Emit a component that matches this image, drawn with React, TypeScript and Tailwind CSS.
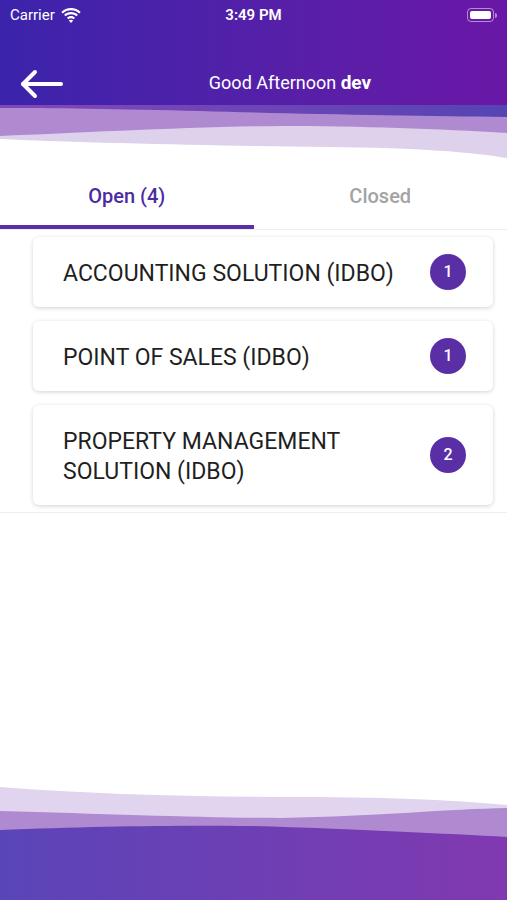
import React from 'react';

const ITEMS = [
  { id: 1, name: 'ACCOUNTING SOLUTION (IDBO)', count: 1 },
  { id: 2, name: 'POINT OF SALES (IDBO)', count: 1 },
  { id: 3, name: 'PROPERTY MANAGEMENT SOLUTION (IDBO)', count: 2 },
];

const StatusBar = () => (
  <div className="relative h-[30px] flex items-center px-[10px] text-white text-[15px]">
    <div className="flex items-center gap-[6px]">
      <span>Carrier</span>
      <svg width="20" height="15" viewBox="0 0 20 15" fill="white">
        <path d="M10 2.2c3.2 0 6.1 1.2 8.3 3.3l1.4-1.5C17.1 1.5 13.7 0 10 0S2.9 1.5.3 4l1.4 1.5C3.9 3.4 6.8 2.2 10 2.2z" />
        <path d="M10 6.2c2.1 0 4 .8 5.5 2.1l1.4-1.5C15.1 5.1 12.7 4.1 10 4.1S4.9 5.1 3.1 6.8l1.4 1.5C6 7 7.9 6.2 10 6.2z" />
        <path d="M10 10.2c1 0 1.9.4 2.6 1l1.4-1.5c-1.1-1-2.5-1.6-4-1.6s-2.9.6-4 1.6l1.4 1.5c.7-.6 1.6-1 2.6-1z" />
        <path d="M10 15l2.2-2.4c-.6-.5-1.4-.8-2.2-.8s-1.6.3-2.2.8L10 15z" />
      </svg>
    </div>
    <span className="absolute left-1/2 -translate-x-1/2 font-semibold">3:49 PM</span>
    <div className="ml-auto flex items-center">
      <div className="w-[27px] h-[14px] rounded-[4px] border border-white/50 p-[2px]">
        <div className="w-full h-full rounded-[2px] bg-white" />
      </div>
      <div className="w-[2px] h-[5px] rounded-r-sm bg-white/50 ml-[1px]" />
    </div>
  </div>
);

const TopWave = () => (
  <svg className="block w-full h-[55px]" viewBox="0 0 507 55" preserveAspectRatio="none">
    <defs>
      <linearGradient id="topband" x1="0" y1="0" x2="1" y2="0">
        <stop offset="0" stopColor="#8446b8" />
        <stop offset="1" stopColor="#5644b4" />
      </linearGradient>
    </defs>
    <rect width="507" height="55" fill="#ffffff" />
    <path d="M0 0H507V53C470 47 420 43 330 42C230 41 90 38 0 34Z" fill="#ddd1eb" />
    <path d="M0 0H507V28C440 24 360 21 280 21C180 22 80 28 0 31Z" fill="#af8ad0" />
    <path d="M0 0H507V12C420 11 300 9 200 6C120 4 50 3 0 3Z" fill="url(#topband)" />
  </svg>
);

const BottomWave = () => (
  <svg className="block w-full h-[120px]" viewBox="0 0 507 120" preserveAspectRatio="none">
    <defs>
      <linearGradient id="bottomband" x1="0" y1="0" x2="1" y2="0">
        <stop offset="0" stopColor="#5a45b8" />
        <stop offset="1" stopColor="#8139b0" />
      </linearGradient>
    </defs>
    <path d="M0 7C90 14 190 17 300 17C400 17 460 21 507 25V120H0Z" fill="#e0d4ee" />
    <path d="M0 31C110 34 210 38 280 38C380 36 450 29 507 28V120H0Z" fill="#b08ad0" />
    <path d="M0 50C90 46 190 45 250 46C350 49 450 54 507 57V120H0Z" fill="url(#bottomband)" />
  </svg>
);

export default function App() {
  return (
    <div className="min-h-[900px] flex flex-col bg-white font-['Roboto',sans-serif]">
      <header className="bg-gradient-to-r from-[#3b23ab] to-[#6a17a6]">
        <StatusBar />
        <div className="h-[75px] pt-[32px] flex items-center">
          <button className="w-[73px] h-full flex items-center pl-[19px]">
            <svg width="44" height="30" viewBox="0 0 44 30" fill="none" stroke="white" strokeWidth="4" strokeLinecap="round" strokeLinejoin="round">
              <path d="M42 15H4" />
              <path d="M16 3L4 15l12 12" />
            </svg>
          </button>
          <div className="flex-1 text-center text-white text-[18px]">
            Good Afternoon <span className="font-bold text-[19px]">dev</span>
          </div>
        </div>
      </header>

      <TopWave />

      {/* Tabs */}
      <div className="h-[70px] flex border-b border-[#eeeeee]">
        <button className="flex-1 flex items-center justify-center pt-[6px] border-b-4 border-[#5b2fa7] text-[20px] font-medium text-[#4b2b9f]">
          Open (4)
        </button>
        <button className="flex-1 flex items-center justify-center pt-[2px] text-[20px] font-medium text-[#a3a3a3]">
          Closed
        </button>
      </div>

      {/* List */}
      <div className="flex flex-col gap-[14px] pt-[7px] pb-[7px] pl-[33px] pr-[14px] border-b border-[#eeeeee]">
        {ITEMS.map((item) => (
          <div
            key={item.id}
            className="flex items-center gap-4 rounded-[6px] bg-white py-[17px] pl-[30px] pr-[27px] shadow-[0_1px_4px_rgba(0,0,0,0.18)]"
          >
            <span className="flex-1 pt-[5px] pb-[1px] text-[23px] leading-[30px] text-[#1f1f1f]">{item.name}</span>
            <span className="w-[36px] h-[36px] shrink-0 rounded-full bg-[#5a2fa6] text-white text-[16px] font-medium flex items-center justify-center">
              {item.count}
            </span>
          </div>
        ))}
      </div>

      <div className="flex-1" />

      <BottomWave />
    </div>
  );
}
